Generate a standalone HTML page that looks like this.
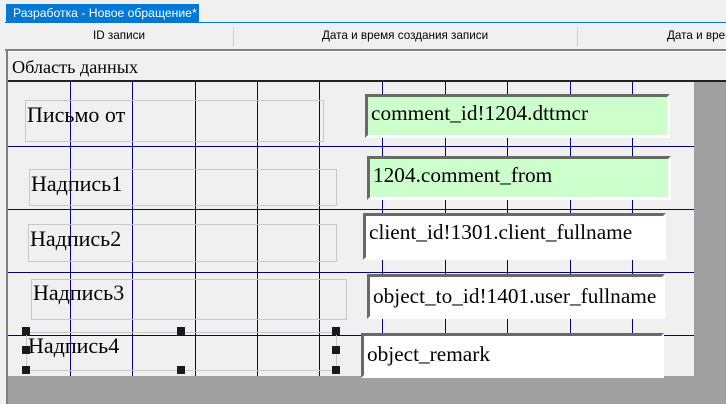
<!DOCTYPE html>
<html><head><meta charset="utf-8"><style>
*{margin:0;padding:0;box-sizing:border-box}
body{width:726px;height:404px;background:#f0f0f0;position:relative;overflow:hidden;font-family:"Liberation Serif",serif}
.a{position:absolute}
.ui{font-family:"Liberation Sans","DejaVu Sans",sans-serif;font-size:11.7px;color:#000}
.v{position:absolute;top:82px;height:294px;width:1px;background:#000080}
.h{position:absolute;left:8px;width:686px;height:1px;background:#000080}
.lb{position:absolute;border:1px solid #c8c8c8;font-size:22px;line-height:24px;color:#000}
.f{position:absolute;border-top:3px solid #696969;border-left:3px solid #696969;border-right:3px solid #fff;border-bottom:3px solid #fff;background:#fff;font-size:21.3px;line-height:24px;padding-left:3px;white-space:nowrap;overflow:hidden;color:#000}
.g{background:#ccffcc}
.hd{position:absolute;width:8px;height:8px;background:#1a1a1a}
</style></head><body>
<div class="a ui" style="left:6px;top:4px;width:193px;height:18px;background:#0078d7;color:#fff;font-size:12.2px;line-height:18px;padding-left:7px">Разработка - Новое обращение*</div>
<div class="a" style="left:5px;top:22px;width:721px;height:1px;background:#0078d7"></div>
<div class="a ui" style="left:93px;top:29px">ID записи</div>
<div class="a" style="left:233px;top:27px;width:1px;height:20px;background:#d0d0d0"></div>
<div class="a ui" style="left:322px;top:29px">Дата и время создания записи</div>
<div class="a" style="left:577px;top:27px;width:1px;height:20px;background:#d0d0d0"></div>
<div class="a ui" style="left:667px;top:29px;white-space:nowrap">Дата и время</div>
<div class="a" style="left:5px;top:49px;width:721px;height:2px;background:#808080"></div>
<div class="a" style="left:8px;top:51px;width:718px;height:1px;background:#fff"></div>
<div class="a" style="left:6px;top:49px;width:2px;height:355px;background:#808080"></div>
<div class="a" style="left:12px;top:57px;font-size:18.2px;color:#000">Область данных</div>
<div class="a" style="left:8px;top:80px;width:718px;height:2px;background:#222"></div>
<div class="a" style="left:694px;top:82px;width:32px;height:322px;background:#a0a0a0"></div>
<div class="a" style="left:8px;top:376px;width:718px;height:28px;background:#a0a0a0"></div>
<div class="v" style="left:70px"></div><div class="v" style="left:132px"></div><div class="v" style="left:195px"></div><div class="v" style="left:257px"></div><div class="v" style="left:319px"></div><div class="v" style="left:382px"></div><div class="v" style="left:445px"></div><div class="v" style="left:507px"></div><div class="v" style="left:570px"></div><div class="v" style="left:632px"></div>
<div class="h" style="top:146px"></div><div class="h" style="top:209px"></div><div class="h" style="top:272px"></div><div class="h" style="top:335px"></div>
<div class="lb" style="left:25px;top:100px;width:299px;height:42px;padding:2px 0 0 1px">Письмо от</div>
<div class="lb" style="left:29px;top:169px;width:308px;height:37px;padding:2px 0 0 1px">Надпись1</div>
<div class="lb" style="left:28px;top:224px;width:309px;height:38px;padding:2px 0 0 1px">Надпись2</div>
<div class="lb" style="left:31px;top:279px;width:316px;height:41px;padding:1px 0 0 1px">Надпись3</div>
<div class="lb" style="left:26px;top:332px;width:311px;height:39px;padding:1px 0 0 1px">Надпись4</div>
<div class="hd" style="left:22px;top:327px"></div><div class="hd" style="left:22px;top:346px"></div><div class="hd" style="left:22px;top:366px"></div>
<div class="hd" style="left:177px;top:327px"></div><div class="hd" style="left:177px;top:366px"></div>
<div class="hd" style="left:332px;top:327px"></div><div class="hd" style="left:332px;top:346px"></div><div class="hd" style="left:332px;top:366px"></div>
<div class="f g" style="left:365px;top:94px;width:305px;height:44px;padding-top:4px">comment_id!1204.dttmcr</div>
<div class="f g" style="left:367px;top:156px;width:304px;height:44px;padding-top:4px">1204.comment_from</div>
<div class="f" style="left:363px;top:213px;width:303px;height:47px;padding-top:4px">client_id!1301.client_fullname</div>
<div class="f" style="left:367px;top:274px;width:298px;height:45px;padding-top:7px">object_to_id!1401.user_fullname</div>
<div class="f" style="left:361px;top:333px;width:303px;height:45px;padding-top:6px">object_remark</div>
</body></html>
